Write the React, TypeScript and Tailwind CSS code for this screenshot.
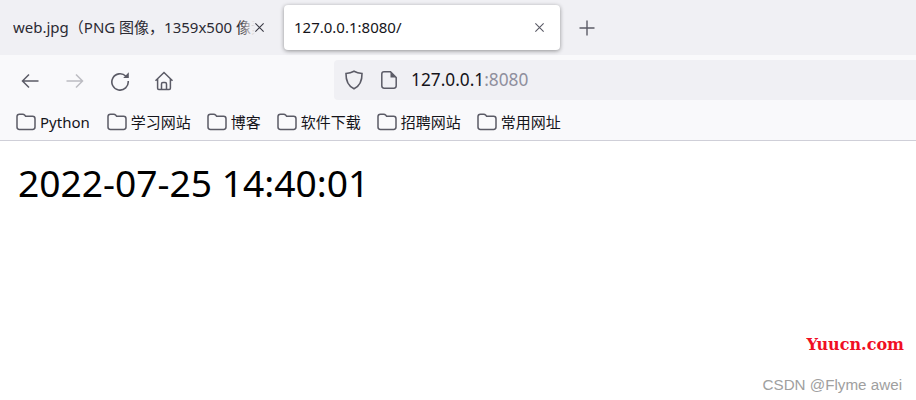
const cjk = "font-['Noto_Sans','Noto_Sans_CJK_SC',sans-serif]";

const bookmarks = ["Python", "学习网站", "博客", "软件下载", "招聘网站", "常用网址"];

function CloseIcon({ className }: { className: string }) {
  return (
    <svg viewBox="0 0 12 12" className={className} fill="none" stroke="currentColor" strokeWidth="1.2">
      <path d="M1.5 1.5l9 9M10.5 1.5l-9 9" />
    </svg>
  );
}

function FolderIcon() {
  return (
    <svg viewBox="0 0 20 18" className="w-[20px] h-[18px] shrink-0" fill="none" stroke="#5b5b66" strokeWidth="1.5">
      <path d="M1 3.6C1 2.2 2 1.2 3.4 1.2h3.4c.8 0 1.3.3 1.8.9l1 1.2h7c1.4 0 2.4 1 2.4 2.4v8.4c0 1.4-1 2.4-2.4 2.4H3.4C2 16.5 1 15.5 1 14.100z" />
    </svg>
  );
}

export default function App() {
  return (
    <div className={`relative w-[916px] h-[400px] overflow-hidden bg-white ${cjk}`}>
      {/* tab strip */}
      <div className="h-[55px] bg-[#f0f0f4] flex items-start">
        <div className="w-[270px] h-[55px] pl-[13px] pr-[5px] flex items-center text-[15px] text-[#2b2a33]">
          <span className="relative w-[242px] overflow-hidden whitespace-nowrap">
            web.jpg（PNG 图像，1359x500 像素）
            <span className="absolute right-0 top-0 bottom-0 w-[16px] bg-gradient-to-r from-transparent to-[#f0f0f4]" />
          </span>
          <CloseIcon className="w-[11px] h-[11px] ml-[-1px] text-[#3a3a44]" />
        </div>
        <div className="ml-[14px] mt-[5px] w-[276px] h-[45px] bg-white rounded-[4px] shadow-[0_1px_4px_rgba(0,0,0,0.4)] pl-[10px] pr-[15px] flex items-center justify-between text-[15px] text-[#15141a]">
          <span>127.0.0.1:8080/</span>
          <CloseIcon className="w-[11px] h-[11px] text-[#5b5b66]" />
        </div>
        <svg viewBox="0 0 16 16" className="ml-[19px] mt-[20px] w-[16px] h-[16px]" fill="none" stroke="#5b5b66" strokeWidth="1.4">
          <path d="M8 0.500v15M0.500 8h15" />
        </svg>
      </div>

      {/* nav bar */}
      <div className="h-[46px] bg-[#f9f9fb] flex items-center pl-[21px] pt-[5px] pb-[1px]">
        <div className="flex items-center pt-[2px]">
          <svg viewBox="0 0 18 16" className="w-[18px] h-[16px]" fill="none" stroke="#5b5b66" strokeWidth="1.5">
            <path d="M17.500 8H1.500M8 1.500L1.500 8 8 14.500" />
          </svg>
          <svg viewBox="0 0 18 16" className="ml-[27px] w-[18px] h-[16px]" fill="none" stroke="#bcbcc2" strokeWidth="1.5">
            <path d="M0.500 8h16M10 1.500L16.500 8 10 14.500" />
          </svg>
          <svg viewBox="0 0 20 20" className="ml-[26px] w-[20px] h-[20px]" fill="none" stroke="#5b5b66" strokeWidth="1.6">
            <path d="M15.900 5.200A8.200 8.200 0 1 0 18.200 10" />
            <path d="M18.800 1.300v5.600h-5.600z" fill="#5b5b66" stroke="none" />
          </svg>
          <svg viewBox="0 0 20 20" className="ml-[24px] w-[20px] h-[20px]" fill="none" stroke="#5b5b66" strokeWidth="1.5">
            <path d="M1.500 9.800L10 1.500l8.500 8.300M3.600 8v9.200c0 .7.500 1.200 1.200 1.200h10.400c.7 0 1.200-.5 1.200-1.200V8" />
            <path d="M7.500 18.400v-5.400c0-.8.600-1.400 1.400-1.400h2.200c.8 0 1.400.6 1.400 1.400v5.400" />
          </svg>
        </div>
        {/* url bar */}
        <div className="ml-[160px] flex-1 h-[40px] bg-[#f0f0f4] rounded-l-[4px] flex items-center pl-[10px]">
          <svg viewBox="0 0 20 20" className="w-[20px] h-[20px]" fill="none" stroke="#5b5b66" strokeWidth="1.6">
            <path d="M10 1.200c2.400 1.300 5 2 8 2.300.2 7.300-2.600 12.700-8 15.300C4.600 16.200 1.800 10.800 2 3.500c3-.3 5.600-1 8-2.300z" />
          </svg>
          <svg viewBox="0 0 16 18" className="ml-[17px] w-[16px] h-[18px]" fill="none" stroke="#5b5b66" strokeWidth="1.5">
            <path d="M3 .8h6.500L15.200 6.500v8.300c0 1.300-1 2.400-2.400 2.400H3.200C1.900 17.200.8 16.100.8 14.800V3C.8 1.800 1.800.8 3 .8z" />
            <path d="M9.500 1v5.500h5.500" fill="#5b5b66" stroke="none" />
          </svg>
          <span className="ml-[14px] text-[17.300px] text-[#15141a]">
            127.0.0.1<span className="text-[#8f8f9d]">:8080</span>
          </span>
        </div>
      </div>

      {/* bookmarks */}
      <div className="h-[40px] bg-[#f9f9fb] border-b border-[#cfcfd8] pl-[16px] pt-[3px] flex items-center gap-[16px] text-[15px] text-[#15141a]">
        {bookmarks.map((name) => (
          <div key={name} className="flex items-center gap-[4px] first:mr-[1px]">
            <FolderIcon />
            <span>{name}</span>
          </div>
        ))}
      </div>

      <p className="pl-[18px] pt-[17px] text-[37.200px] leading-[50px] text-black">2022-07-25 14:40:01</p>

      <span className="absolute right-[12px] top-[333px] font-['DejaVu_Serif',serif] font-bold text-[16px] text-[#f00f24]">
        Yuucn.com
      </span>
      <span className="absolute right-[14px] top-[374px] font-['Liberation_Sans',sans-serif] text-[15.200px] text-[#a0a0a0]">
        CSDN @Flyme awei
      </span>
    </div>
  );
}
